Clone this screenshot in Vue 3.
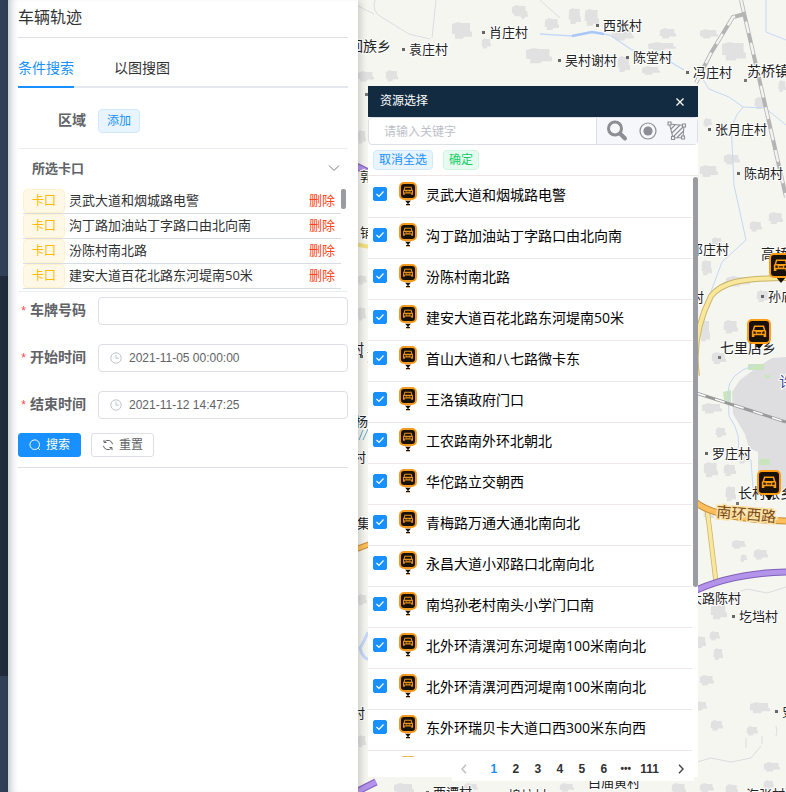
<script setup>
import { ref } from 'vue'

const keyword = ref('')
const plate = ref('')
const start = ref('2021-11-05 00:00:00')
const end = ref('2021-11-12 14:47:25')

const chosen = ref([
  '灵武大道和烟城路电警',
  '沟丁路加油站丁字路口由北向南',
  '汾陈村南北路',
  '建安大道百花北路东河堤南50米',
])

const resources = ref(
  [
    '灵武大道和烟城路电警',
    '沟丁路加油站丁字路口由北向南',
    '汾陈村南北路',
    '建安大道百花北路东河堤南50米',
    '首山大道和八七路微卡东',
    '王洛镇政府门口',
    '工农路南外环北朝北',
    '华佗路立交朝西',
    '青梅路万通大通北南向北',
    '永昌大道小邓路口北南向北',
    '南坞孙老村南头小学门口南',
    '北外环清潩河东河堤南100米南向北',
    '北外环清潩河西河堤南100米南向北',
    '东外环瑞贝卡大道口西300米东向西',
  ].map((name) => ({ name, checked: true }))
)

const pages = ['1', '2', '3', '4', '5', '6', '•••', '111']

// Village labels: x, baseline, text, dot marker
const villages = [
  [489, 37, '肖庄村', 1], [603, 30, '西张村', 1], [409, 54, '袁庄村', 1],
  [565, 65, '吴村谢村', 1], [633, 62, '陈堂村', 1], [693, 77, '冯庄村', 1],
  [715, 134, '张月庄村', 1], [744, 178, '陈胡村', 1], [690, 254, '邓庄村', 0],
  [768, 301, '孙庙村', 1], [691, 302, '村', 0], [712, 458, '罗庄村', 1],
  [689, 603, '大路陈村', 0], [739, 621, '圪垱村', 1], [782, 716, '史庄', 1],
  [746, 799, '海张村', 0], [433, 797, '西谭村', 1], [508, 800, '坞坊村', 0],
  [588, 787, '白庙黄村', 0], [360, 181, '郭', 0], [360, 237, '铺', 0],
  [351, 353, '村', 0], [367, 361, '刘', 1], [355, 426, '杨杜', 0],
  [353, 462, '村', 0], [357, 528, '集', 0], [352, 718, '村', 0],
]
const towns = [
  [349, 51, '回族乡'], [747, 76, '苏桥镇'], [761, 259, '高桥'],
  [720, 353, '七里店乡'], [738, 498, '长村张乡'],
]
// Built-up areas: x, y, width, height
const blocks = [
  [512, 5, 15, 9], [521, 10, 7, 6], [452, 22, 20, 16], [482, 38, 9, 8], [526, 48, 26, 14],
  [569, 8, 12, 15], [585, 9, 14, 16], [545, 18, 14, 10], [612, 30, 22, 8], [618, 56, 12, 15],
  [648, 42, 28, 6], [642, 66, 18, 6], [358, 71, 16, 8], [386, 70, 12, 9], [660, 28, 16, 8],
  [700, 29, 18, 7], [722, 42, 24, 18], [704, 118, 8, 6], [700, 165, 18, 10], [724, 154, 16, 8],
  [755, 97, 12, 10], [756, 168, 16, 10], [779, 80, 7, 10], [712, 237, 10, 8], [750, 221, 12, 8],
  [769, 212, 14, 10], [702, 260, 10, 14], [700, 320, 10, 22], [724, 320, 14, 12], [726, 276, 24, 8],
  [757, 290, 12, 10], [712, 352, 14, 10], [702, 403, 20, 8], [716, 427, 10, 8], [704, 462, 14, 14],
  [724, 464, 12, 10], [726, 486, 10, 14], [704, 508, 10, 10], [738, 450, 12, 12], [732, 540, 14, 6],
  [754, 549, 14, 8], [741, 554, 6, 5], [711, 604, 16, 14], [710, 631, 10, 7], [697, 636, 9, 10],
  [714, 648, 9, 10], [700, 675, 14, 8], [750, 702, 20, 9], [711, 720, 12, 8], [697, 701, 10, 7],
  [747, 726, 11, 7], [764, 762, 16, 7], [764, 780, 10, 7], [700, 783, 14, 7], [726, 784, 12, 8],
  [394, 783, 20, 9], [464, 783, 14, 6], [560, 783, 14, 6], [672, 783, 14, 9], [358, 130, 8, 12],
  [358, 275, 9, 7], [358, 307, 8, 12], [358, 594, 9, 9], [358, 735, 8, 10],
]
const markers = [[781, 265], [759, 331], [769, 482]]
// Front view of a car, centred on the origin
const carPath =
  'M-5 -5.500H5L6.300 -1L7.200 0V6H4.600V4.200H-4.600V6H-7.200V0L-6.300 -1ZM-3.900 -4L-4.800 -1H4.800L3.900 -4ZM-5.600 .6V2.700H-3L-3.600 .6ZM5.600 .6V2.700H3L3.600 .6ZM-2.200 1.200V2.500H2.200V1.200Z'
</script>

<template>
  <div class="page">
    <div class="rail"></div>

    <aside class="side">
      <h1>车辆轨迹</h1>
      <nav class="tabs">
        <button class="tab active" type="button">条件搜索</button>
        <button class="tab" type="button">以图搜图</button>
      </nav>

      <div class="area">
        <span class="label">区域</span>
        <button class="add" type="button">添加</button>
      </div>

      <section class="chosen">
        <button class="fold" type="button">
          <span>所选卡口</span>
          <svg width="12" height="8" viewBox="0 0 12 8"><path d="M1 1.500l5 5 5-5" fill="none" stroke="#777b84" /></svg>
        </button>
        <div class="chosen-body">
          <ul>
            <li v-for="name in chosen" :key="name">
              <span class="kind">卡口</span>
              <span class="name">{{ name }}</span>
              <button class="remove" type="button">删除</button>
            </li>
          </ul>
          <i class="thumb"></i>
        </div>
      </section>

      <form class="form" @submit.prevent>
        <div class="field">
          <label class="label required" for="plate">车牌号码</label>
          <div class="box"><input id="plate" v-model="plate" type="text" /></div>
        </div>
        <div class="field">
          <label class="label required" for="start">开始时间</label>
          <div class="box">
            <svg class="clock" width="12" height="12" viewBox="0 0 12 12"><circle cx="6" cy="6" r="5.2" /><path d="M6 2.800v3.400h3" /></svg>
            <input id="start" v-model="start" type="text" />
          </div>
        </div>
        <div class="field">
          <label class="label required" for="end">结束时间</label>
          <div class="box">
            <svg class="clock" width="12" height="12" viewBox="0 0 12 12"><circle cx="6" cy="6" r="5.2" /><path d="M6 2.800v3.400h3" /></svg>
            <input id="end" v-model="end" type="text" />
          </div>
        </div>
        <div class="actions">
          <button class="btn primary" type="submit">
            <svg width="12" height="12" viewBox="0 0 12 12"><circle cx="5.700" cy="5.700" r="4.800" /><path d="M9.200 9.200l1.800 1.800" /></svg>
            搜索
          </button>
          <button class="btn" type="reset">
            <svg width="12" height="12" viewBox="0 0 12 12"><path d="M10.600 5.200A4.700 4.700 0 0 0 2.400 3M1.400 6.800A4.700 4.700 0 0 0 9.600 9M2 .9v2.600h2.600M10 11.100V8.500H7.400" /></svg>
            重置
          </button>
        </div>
      </form>
    </aside>

    <main class="map">
      <svg class="canvas" viewBox="358 0 428 792" preserveAspectRatio="xMinYMin slice">
        <rect x="358" width="428" height="792" fill="#f5f6f0" />
        <g fill="#e1e1e2">
          <path
            v-for="(b, i) in blocks"
            :key="i"
            :d="`M${b[0]} ${b[1] + 2}l${b[2] * 0.3} -2l${b[2] * 0.2} 1h${b[2] * 0.4}v${b[3] * 0.5}l${b[2] * 0.1} 1v${b[3] * 0.3}h${-b[2] * 0.4}l-1 2h${-b[2] * 0.4}v${-b[3] * 0.3}h${-b[2] * 0.15}z`"
          />
        </g>
        <path fill="#dedee1" d="M786 357l-14 1-16 10-16 12-8 12 1 22 12 20 4 14 9 4v30l12 10h20z" />
        <path fill="#c9e5bd" d="M748 364h16v6h-16zM723 392l8-2v12l-7-2zM759 459h11v6h-11zM765 375h5v3h-5z" />
        <g fill="none" stroke="#c5d7f5">
          <path d="M699 73l10 16 20 8 14 10 22 1 21 17M743 107q-14 14-11 36l2 42 12 55-24 22-15 40M766 0v32l20 8" />
          <path d="M728 392q0-18 26-27M728 392l1 24q14 20 8 38l14 6 2 28" />
        </g>
        <g fill="none" stroke="#cfd2d6" stroke-width="0.7">
          <path d="M436 0l-4 38M375 0q-4 12 8 18l26 16 21 5M540 0l20 18M358 6l16 8M697 600l30-4 20-7 20 4 19-6M697 762l14-4 20 4 20-4 10-12" />
          <path d="M746 748v-10M762 744v-8M776 736q2-4 0-10" />
        </g>
        <path d="M540 34l32 2 20-4 18 3 22 15 32 8 20 12" fill="none" stroke="#c5d8f8" stroke-width="1.3" />
        <path d="M572 36l20-4 12 2" fill="none" stroke="#a9c6f9" stroke-width="2.400" />
        <g fill="none">
          <path d="M741 0l15 65 16 70 14 62" stroke="#b4b4b4" stroke-width="4" />
          <path d="M741 0l15 65 16 70 14 62" stroke="#f4f4f2" stroke-width="2.400" stroke-dasharray="12 10" />
          <path d="M696 83l15-30 22-36 12-3" stroke="#b4b4b4" stroke-width="4" />
          <path d="M696 83l15-30 22-36 12-3" stroke="#f4f4f2" stroke-width="2.400" stroke-dasharray="12 10" />
          <path d="M696 393l90 29" stroke="#999" stroke-width="3" />
          <path d="M696 393l90 29" stroke="#fff" stroke-width="1.500" stroke-dasharray="10 10" />
          <path d="M697 376q-6-40 14-80 8-10 24-14 20-4 51-4" stroke="#c8b46a" stroke-width="6" />
          <path d="M697 376q-6-40 14-80 8-10 24-14 20-4 51-4" stroke="#f9e79b" stroke-width="4" />
          <path d="M707 508l9 74" stroke="#c8b46a" stroke-width="5" />
          <path d="M707 508l9 74" stroke="#f9e79b" stroke-width="3.500" />
          <path d="M694 501q20 18 92 20" stroke="#c78a3a" stroke-width="7" />
          <path d="M694 501q20 18 92 20" stroke="#fdbf5b" stroke-width="5" />
          <path d="M690 593q40-20 96-21" stroke="#7f5fb8" stroke-width="7" />
          <path d="M690 593q40-20 96-21" stroke="#b493ea" stroke-width="5" />
          <path d="M354 165l20 10M354 793l22-11" stroke="#7f5fb8" stroke-width="7" />
          <path d="M354 165l20 10M354 793l22-11" stroke="#b493ea" stroke-width="5" />
          <path d="M354 550l16-6" stroke="#c78a3a" stroke-width="6" />
          <path d="M354 550l16-6" stroke="#fdbf5b" stroke-width="4" />
          <path d="M354 244l16 3" stroke="#f3df7d" stroke-width="4" />
          <path d="M368 632q-4 10-8 16 2 10 10 12" stroke="#c5d8f8" stroke-width="3" />
          <path d="M359 440l4-10M363 440l5-11" stroke="#62a9c5" />
        </g>
        <g class="village">
          <template v-for="(v, i) in villages" :key="i">
            <rect v-if="v[3]" :x="v[0] - 7" :y="v[1] - 6" width="3" height="3" fill="#666" />
            <text :x="v[0]" :y="v[1]">{{ v[2] }}</text>
          </template>
        </g>
        <path fill="#777" d="M744 79h3v3h-3zM718 356h3v3h-3zM736 502h3v3h-3zM365 93h3v3h-3z" />
        <g class="town">
          <text v-for="t in towns" :key="t[2]" :x="t[0]" :y="t[1]">{{ t[2] }}</text>
        </g>
        <text class="city" x="779" y="387">许昌</text>
        <text class="road" x="716" y="517" transform="rotate(5 716 517)">南环西路</text>
        <g v-for="m in markers" :key="m[1]" :transform="`translate(${m[0]} ${m[1]})`">
          <path d="M-5 12h10l-5 6z" fill="#17110a" />
          <rect x="-11" y="-11" width="22" height="23" rx="4" fill="#17110a" stroke="#ff9c12" stroke-width="2" />
          <path :d="carPath" fill="#ff9c12" fill-rule="evenodd" />
        </g>
      </svg>

      <section class="dialog">
        <header>
          <h2>资源选择</h2>
          <button class="close" type="button" aria-label="关闭">
            <svg width="8" height="8" viewBox="0 0 8 8"><path d="M.5.5l7 7M7.500.5l-7 7" fill="none" stroke="#fff" stroke-width="1.300" /></svg>
          </button>
        </header>
        <div class="search">
          <input v-model="keyword" type="text" placeholder="请输入关键字" aria-label="请输入关键字" />
          <div class="tools">
            <button type="button" aria-label="搜索">
              <svg width="22" height="22" viewBox="0 0 22 22"><circle cx="9" cy="8.500" r="6.500" fill="none" stroke="#8b8e95" stroke-width="3" /><path d="M14 13.500l5 5" stroke="#8b8e95" stroke-width="4" stroke-linecap="round" /></svg>
            </button>
            <button type="button" aria-label="圆形">
              <svg width="18" height="18" viewBox="0 0 18 18"><circle cx="9" cy="9" r="8" fill="none" stroke="#8b8e95" stroke-width="1.200" /><circle cx="9" cy="9" r="4.600" fill="#8b8e95" /></svg>
            </button>
            <button type="button" aria-label="多边形">
              <svg width="20" height="20" viewBox="0 0 20 20" fill="none" stroke="#8b8e95" stroke-width="1.100">
                <path d="M2.500 3L17 4.500 16 16.500 6 17z" />
                <path d="M4 8l4-4M5 12l8-8M6 16L16.500 5.500M10 16.500l6.500-6.500" />
                <path d="M1 1h3v3H1zM15.500 3h3v3h-3zM14.500 15h3v3h-3zM4.500 15.500h3v3h-3z" fill="#f5f7fa" />
              </svg>
            </button>
          </div>
        </div>
        <div class="bulk">
          <button class="blue" type="button">取消全选</button>
          <button class="green" type="button">确定</button>
        </div>
        <div class="list">
          <label v-for="r in resources" :key="r.name" class="row">
            <input v-model="r.checked" type="checkbox" />
            <svg class="pin" width="18" height="24" viewBox="0 0 18 24">
              <path d="M6 18.500h6l-2.500 3v1h-1v-1z" fill="#17110a" />
              <path d="M6 18.300h6M7 23.500h4" stroke="#e9b98a" />
              <path d="M7 22h4v1H7z" fill="#17110a" />
              <rect x="1" y="1" width="16" height="16" rx="4" fill="#17110a" stroke="#f39a1e" stroke-width="2" />
              <path :d="carPath" transform="translate(9 8.500) scale(.7)" fill="#e8921c" fill-rule="evenodd" />
            </svg>
            <span>{{ r.name }}</span>
          </label>
          <i class="peek"></i>
          <i class="scroll"></i>
        </div>
        <nav class="pager">
          <button class="arrow" type="button" aria-label="上一页" disabled>
            <svg width="8" height="10" viewBox="0 0 8 10"><path d="M6 .8L2 5l4 4.200" fill="none" stroke="#bbbec5" stroke-width="1.400" /></svg>
          </button>
          <button v-for="p in pages" :key="p" type="button" :class="{ current: p === '1', dots: p === '•••' }">{{ p }}</button>
          <button class="arrow" type="button" aria-label="下一页">
            <svg width="8" height="10" viewBox="0 0 8 10"><path d="M2 .8L6 5l-4 4.200" fill="none" stroke="#444" stroke-width="1.400" /></svg>
          </button>
        </nav>
      </section>
    </main>
  </div>
</template>

<style>
body {
  margin: 0;
  overflow: hidden;
}
</style>

<style scoped>
* {
  box-sizing: border-box;
}
.page {
  display: flex;
  height: 100vh;
  font-family: "Open Sans", "Noto Sans CJK SC", sans-serif;
  font-size: 14px;
  color: #303133;
}
button,
input {
  font-family: inherit;
  margin: 0;
  padding: 0;
  border: 0;
  background: none;
  color: inherit;
  outline: none;
}
h1,
h2,
ul {
  margin: 0;
  padding: 0;
  font-weight: 400;
}
svg {
  display: block;
  flex: none;
}
.rail {
  flex: 0 0 8px;
  background: linear-gradient(#304059 276px, #1f2b3b 276px, #1f2b3b 676px, #304059 676px);
}
.side {
  flex: 0 0 350px;
  padding: 0 10px;
  background: #fff;
  box-shadow: inset 8px 0 8px -6px #b4bac2, 2px 0 8px rgba(0, 0, 0, 0.2);
  z-index: 1;
}
h1 {
  height: 38px;
  line-height: 34px;
  font-size: 16px;
  border-bottom: 1px solid #dcdfe6;
}
.tabs {
  display: flex;
  gap: 40px;
  margin-top: 10px;
  box-shadow: inset 0 -2px #e4e7ed;
}
.tab {
  height: 40px;
  padding-top: 2px;
  font-size: 14px;
  line-height: 36px;
  border-bottom: 2px solid transparent;
}
.tab.active {
  color: #1890ff;
  border-color: #1890ff;
}
.area {
  display: flex;
  align-items: center;
  height: 61px;
  padding-top: 5px;
  border-bottom: 1px solid #ebeef5;
}
.label {
  width: 80px;
  padding: 0 12px 4px 0;
  font-weight: 700;
  color: #606266;
  text-align: right;
}
.required::before {
  content: "*";
  margin-right: 4px;
  color: #ff4949;
  font: 12px "Liberation Sans", sans-serif;
}
.add {
  width: 42px;
  height: 24px;
  font-size: 12px;
  line-height: 22px;
  color: #1890ff;
  background: #e8f4ff;
  border: 1px solid #d1e9ff;
  border-radius: 4px;
}
.chosen {
  border-bottom: 1px solid #ebeef5;
  padding-bottom: 2px;
}
.fold {
  display: flex;
  justify-content: space-between;
  align-items: center;
  width: 100%;
  height: 40px;
  padding: 0 8px 3px 14px;
  font-size: 13px;
  font-weight: 700;
  color: #606266;
}
.chosen-body {
  display: flex;
  padding: 0 2px 0 5px;
}
.chosen ul {
  flex: 1;
  list-style: none;
}
.chosen li {
  display: flex;
  align-items: center;
  height: 25px;
  padding-right: 6px;
  font-size: 13px;
  line-height: 22px;
  border-bottom: 1px solid #d8dce5;
}
.kind {
  width: 42px;
  height: 24px;
  margin-right: 4px;
  font-size: 12px;
  text-align: center;
  color: #ffba00;
  background: #fff8e6;
  border: 1px solid #fff1cc;
  border-radius: 4px;
}
.name,
.remove {
  padding-bottom: 2px;
  line-height: 22px;
}
.name {
  flex: 1;
}
.remove {
  font-size: 13px;
  color: #ff4520;
}
.thumb {
  width: 5px;
  height: 20px;
  border-radius: 2px;
  background: #9b9ca1;
}
.form {
  padding-top: 5px;
  border-bottom: 1px solid #dcdfe6;
}
.field {
  display: flex;
  align-items: center;
  height: 28px;
  margin-bottom: 19px;
}
.field:nth-child(3) {
  margin-bottom: 14px;
}
.box {
  flex: 1;
  display: flex;
  align-items: center;
  gap: 7px;
  height: 28px;
  padding: 0 11px;
  border: 1px solid #dcdfe6;
  border-radius: 4px;
}
.box input {
  flex: 1;
  min-width: 0;
  font-family: "Liberation Sans", sans-serif;
  font-size: 12px;
  color: #606266;
}
.clock {
  fill: none;
  stroke: #c0c4cc;
}
.actions {
  display: flex;
  gap: 10px;
  padding-bottom: 10px;
}
.btn {
  display: flex;
  align-items: center;
  justify-content: center;
  gap: 5px;
  width: 63px;
  height: 24px;
  font-size: 12px;
  line-height: 22px;
  color: #606266;
  border: 1px solid #dcdfe6;
  border-radius: 3px;
}
.btn svg {
  fill: none;
  stroke: currentColor;
}
.primary {
  color: #fff;
  background: #1890ff;
  border-color: #1890ff;
}
.map {
  position: relative;
  flex: 1;
  min-width: 0;
  overflow: hidden;
}
.canvas {
  width: 100%;
  height: 100%;
}
.canvas text {
  paint-order: stroke;
  stroke: #fff;
  stroke-width: 2px;
  font-family: "Noto Sans CJK SC", sans-serif;
  fill: #222;
}
.village {
  font-size: 13px;
}
.town {
  font-size: 14px;
}
.canvas .city {
  font-size: 15px;
  fill: #3b489b;
}
.canvas .road {
  font-size: 15px;
  fill: #7b4a18;
  stroke: #fde2a6;
  stroke-width: 3px;
}
.dialog {
  position: absolute;
  z-index: 2;
  top: 86px;
  left: 10px;
  width: 330px;
  background: linear-gradient(#fff, #fff) 0 0 / 100% calc(100% - 4px) no-repeat;
}
.dialog header {
  display: flex;
  align-items: center;
  justify-content: space-between;
  height: 31px;
  padding: 0 14px 0 12px;
  color: #fff;
  background: #132b40;
}
h2 {
  padding-bottom: 2px;
  font-size: 12px;
  line-height: 28px;
}
.search {
  display: flex;
  height: 28px;
  border: 1px solid #dcdfe6;
  border-radius: 4px;
}
.search input {
  flex: 1;
  min-width: 0;
  padding: 0 15px;
  font-size: 12px;
}
.search input::placeholder {
  color: #bcc0c9;
}
.tools {
  display: flex;
  align-items: center;
  justify-content: space-between;
  width: 101px;
  padding: 0 10px 0 9px;
  background: #f5f7fa;
  border-left: 1px solid #dcdfe6;
}
.bulk {
  display: flex;
  gap: 10px;
  height: 31px;
  padding: 5px;
  border-bottom: 1px solid #f0e6e6;
}
.bulk button {
  height: 20px;
  padding: 0 5px;
  font-size: 12px;
  line-height: 18px;
  border: 1px solid;
  border-radius: 4px;
}
.bulk .blue {
  color: #1890ff;
  background: #e8f4ff;
  border-color: #d1e9ff;
}
.bulk .green {
  color: #13ce66;
  background: #e7faf0;
  border-color: #d0f5e0;
}
.list {
  position: relative;
  padding: 1px 6px 6px 0;
}
.row {
  display: flex;
  align-items: center;
  height: 41px;
  padding: 0 5px 7px;
  color: #000;
  border-bottom: 1px solid #f0e8e8;
}
.row input {
  appearance: none;
  width: 14px;
  height: 14px;
  border-radius: 2px;
  background: #fff;
  border: 1px solid #dcdfe6;
}
.row input:checked {
  border-color: #1890ff;
  background: #1890ff
    url("data:image/svg+xml,%3Csvg xmlns='http://www.w3.org/2000/svg' viewBox='0 0 12 12'%3E%3Cpath d='M2.500 6l2.500 2.500 4.500-5' fill='none' stroke='white' stroke-width='1.200'/%3E%3C/svg%3E")
    center / 12px no-repeat;
}
.pin {
  margin: 0 9px 0 12px;
}
.peek {
  position: absolute;
  left: 34px;
  bottom: 0;
  width: 12px;
  height: 1px;
  background: #f5b75b;
}
.scroll {
  position: absolute;
  top: 1px;
  right: 0;
  width: 5px;
  height: 410px;
  border-radius: 3px;
  background: #9b9ca1;
}
.pager {
  display: flex;
  justify-content: flex-end;
  height: 24px;
  margin: 0 4px 0 84px;
  background: #fff;
}
.pager button {
  min-width: 22px;
  padding: 0 3px 0 4px;
  font: 700 12px/24px "Liberation Sans", sans-serif;
  color: #303133;
}
.pager .current {
  color: #1890ff;
}
.pager .dots {
  font-size: 10px;
}
.pager .arrow {
  display: flex;
  align-items: center;
  justify-content: center;
}
.pager .arrow:first-child {
  margin-right: 8px;
}
.pager .arrow:last-child {
  margin: 0 3px 0 7px;
}
</style>
